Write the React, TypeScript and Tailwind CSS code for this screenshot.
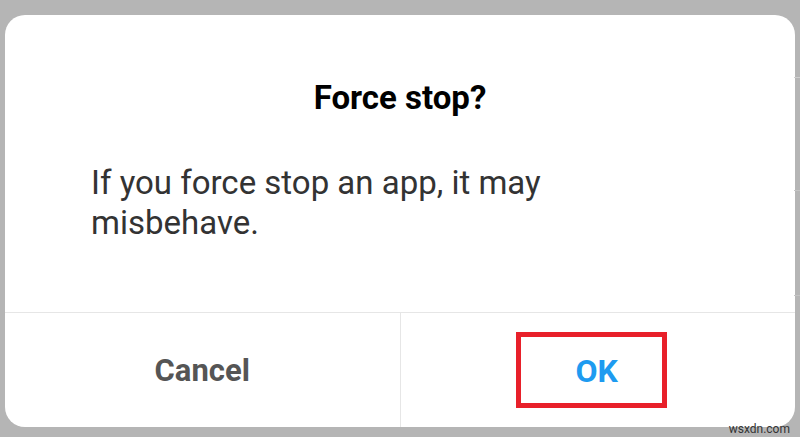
export default function App() {
  return (
    <div
      className="relative h-[437px] w-[800px] overflow-hidden bg-[#b5b5b5] px-[5px] pt-[15px]"
      style={{ fontFamily: "Roboto, 'Noto Sans', Arial, sans-serif" }}
    >
      {/* faint page lines behind the dialog */}
      <div className="absolute right-0 top-[77px] h-px w-[6px] bg-[#cfcfcf]" />
      <div className="absolute right-0 top-[190px] h-px w-[6px] bg-[#c4c4c4]" />
      <div className="absolute right-0 top-[295px] h-px w-[6px] bg-[#c4c4c4]" />

      <div className="flex h-[412px] flex-col overflow-hidden rounded-[20px] bg-white">
        {/* Body */}
        <div className="h-[298px] border-b border-[#e6e6e6] pt-[63px]">
          <h1 className="text-center text-[33px] font-bold leading-[40px] text-black">
            Force stop?
          </h1>
          <p className="mt-[45px] w-[640px] pl-[86px] text-[33px] leading-[40px] text-[#333333]">
            If you force stop an app, it may misbehave.
          </p>
        </div>

        {/* Actions */}
        <div className="flex flex-1">
          <button className="flex flex-1 items-center justify-center border-r border-[#e6e6e6] pt-[2px] text-[31px] font-bold text-[#555555]">
            Cancel
          </button>
          <div className="flex flex-1 items-center justify-center">
            <button className="mr-[12px] flex h-[76px] w-[151px] items-center justify-center border-[5px] border-[#e8202a] pl-[10px] pt-[2px] text-[32px] font-bold text-[#1e9bf0]">
              OK
            </button>
          </div>
        </div>
      </div>

      <span className="absolute bottom-[1px] right-[10px] text-[12px] leading-[14px] text-[#333333]">
        wsxdn.com
      </span>
    </div>
  );
}
